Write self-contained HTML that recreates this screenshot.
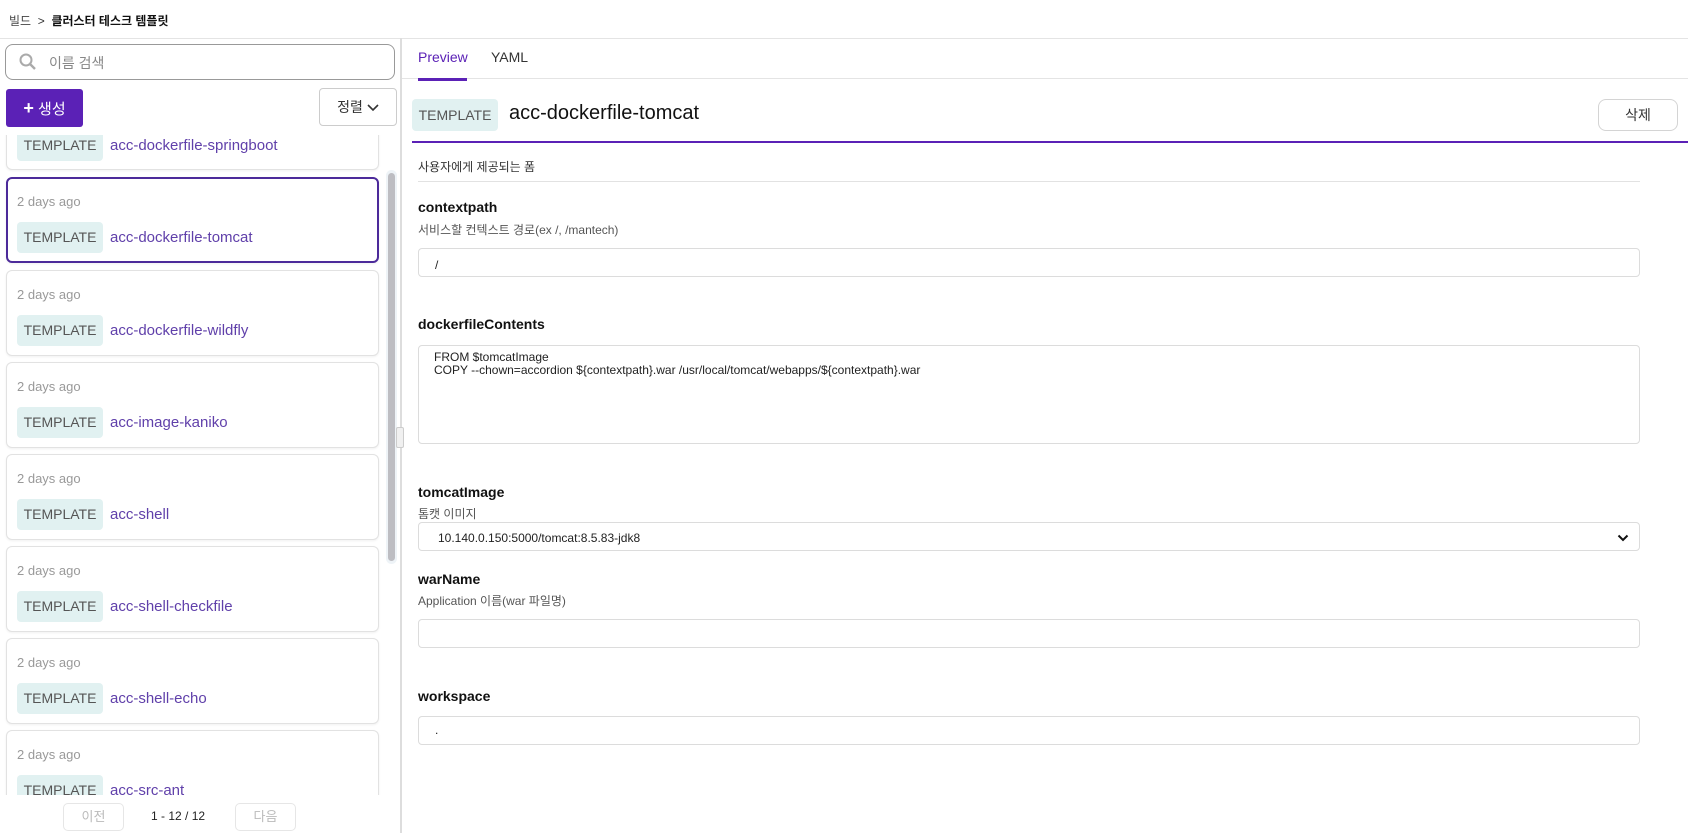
<!DOCTYPE html>
<html><head><meta charset="utf-8"><style>
*{box-sizing:border-box;margin:0;padding:0}
body{width:1688px;height:833px;overflow:hidden;background:#fff;font-family:"Liberation Sans","Noto Sans CJK KR",sans-serif;color:#222;position:relative}
.a{position:absolute}
.card{position:absolute;left:6px;width:373px;height:86px;border:1px solid #e2e2e2;border-radius:6px;background:#fff;box-shadow:0 1px 2px rgba(0,0,0,.06)}
.card.sel{border:2px solid #4c2a9a}
.card .d{position:absolute;left:10px;top:16px;font-size:13px;color:#999}
.badge{position:absolute;background:#e1f1f1;color:#555;border-radius:4px;font-size:14px;text-align:center;line-height:31px}
.card .badge{left:10px;top:44px;width:86px;height:31px}
.card .n{position:absolute;left:103px;top:51px;font-size:15px;color:#6040aa}
.lbl{position:absolute;left:418px;font-size:14px;font-weight:bold;color:#111}
.desc{position:absolute;left:418px;font-size:12px;color:#555}
.inp{position:absolute;left:418px;width:1222px;border:1px solid #dcdcdc;border-radius:4px;background:#fff;font-size:12px;color:#222}
</style></head><body>
<div class="a" style="left:9px;top:12px;font-size:12px;color:#444">빌드 &nbsp;<span style="color:#333">&gt;</span>&nbsp; <b style="color:#111">클러스터 테스크 템플릿</b></div>
<div class="a" style="left:0;top:38px;width:1688px;height:1px;background:#e4e4e4"></div>
<div class="a" style="left:5px;top:44px;width:390px;height:36px;border:1px solid #999;border-radius:8px"></div>
<svg class="a" style="left:18px;top:52px" width="20" height="20" viewBox="0 0 20 20"><circle cx="8" cy="8" r="5.5" fill="none" stroke="#aaa" stroke-width="2"/><path d="M12 12l5 5" stroke="#aaa" stroke-width="2.4"/></svg>
<div class="a" style="left:49px;top:53px;font-size:14px;color:#888">이름 검색</div>
<div class="a" style="left:6px;top:89px;width:77px;height:38px;background:#5b21b6;border-radius:3px;color:#fff;font-size:15px;line-height:38px;text-align:center"><b style="font-size:18px">+</b> 생성</div>
<div class="a" style="left:319px;top:88px;width:78px;height:38px;border:1px solid #ccc;border-radius:4px;font-size:14px;line-height:36px;text-align:center;color:#333">정렬 <svg width="12" height="8" viewBox="0 0 12 8"><path d="M1 1l5 5 5-5" fill="none" stroke="#333" stroke-width="1.6"/></svg></div>
<div class="a" style="left:0;top:135px;width:400px;height:660px;overflow:hidden">
<div class="card" style="top:-50px;height:85px"><div class="badge" style="left:10px;top:44px;width:86px;height:31px">TEMPLATE</div><div class="n">acc-dockerfile-springboot</div></div>
<div class="card sel" style="top:42px"><div class="d" style="left:9px;top:15px">2 days ago</div><div class="badge" style="left:9px;top:43px;width:86px;height:31px">TEMPLATE</div><div class="n" style="left:102px;top:50px">acc-dockerfile-tomcat</div></div>
<div class="card" style="top:135px"><div class="d">2 days ago</div><div class="badge">TEMPLATE</div><div class="n">acc-dockerfile-wildfly</div></div>
<div class="card" style="top:227px"><div class="d">2 days ago</div><div class="badge">TEMPLATE</div><div class="n">acc-image-kaniko</div></div>
<div class="card" style="top:319px"><div class="d">2 days ago</div><div class="badge">TEMPLATE</div><div class="n">acc-shell</div></div>
<div class="card" style="top:411px"><div class="d">2 days ago</div><div class="badge">TEMPLATE</div><div class="n">acc-shell-checkfile</div></div>
<div class="card" style="top:503px"><div class="d">2 days ago</div><div class="badge">TEMPLATE</div><div class="n">acc-shell-echo</div></div>
<div class="card" style="top:595px"><div class="d">2 days ago</div><div class="badge">TEMPLATE</div><div class="n">acc-src-ant</div></div>
<div class="a" style="left:386px;top:35px;width:11px;height:394px;background:#eef3f7;border-radius:6px"></div>
<div class="a" style="left:388px;top:38px;width:7px;height:388px;background:#bdbdc2;border-radius:4px"></div>
</div>
<div class="a" style="left:63px;top:803px;width:61px;height:28px;border:1px solid #e6e6e6;border-radius:5px;font-size:13px;color:#bbb;text-align:center;line-height:26px">이전</div>
<div class="a" style="left:151px;top:809px;font-size:12px;color:#222">1 - 12 / 12</div>
<div class="a" style="left:235px;top:803px;width:61px;height:28px;border:1px solid #e6e6e6;border-radius:5px;font-size:13px;color:#bbb;text-align:center;line-height:26px">다음</div>
<div class="a" style="left:400px;top:38px;width:2px;height:795px;background:#ddd"></div>
<div class="a" style="left:396px;top:427px;width:8px;height:21px;background:#f0f0f0;border:1px solid #ccc;border-radius:2px"></div>
<div class="a" style="left:418px;top:49px;font-size:14px;color:#5b21b6">Preview</div>
<div class="a" style="left:491px;top:49px;font-size:14px;color:#333">YAML</div>
<div class="a" style="left:402px;top:78px;width:1286px;height:1px;background:#e4e4e4"></div>
<div class="a" style="left:418px;top:78px;width:49px;height:3px;background:#5b21b6"></div>
<div class="badge" style="left:412px;top:99px;width:86px;height:32px;line-height:32px">TEMPLATE</div>
<div class="a" style="left:509px;top:102px;font-size:20px;color:#111">acc-dockerfile-tomcat</div>
<div class="a" style="left:1598px;top:99px;width:80px;height:32px;border:1px solid #d4d4d4;border-radius:8px;font-size:14px;text-align:center;line-height:30px;color:#333">삭제</div>
<div class="a" style="left:412px;top:141px;width:1276px;height:2px;background:#5b21b6"></div>
<div class="a" style="left:418px;top:158px;font-size:12px;color:#333">사용자에게 제공되는 폼</div>
<div class="a" style="left:418px;top:181px;width:1222px;height:1px;background:#e2e2e2"></div>
<div class="lbl" style="top:199px">contextpath</div>
<div class="desc" style="top:221px">서비스할 컨텍스트 경로(ex /, /mantech)</div>
<div class="inp" style="top:248px;height:29px;padding:9px 0 0 16px">/</div>
<div class="lbl" style="top:316px">dockerfileContents</div>
<div class="inp" style="top:345px;height:99px;padding:5px 0 0 15px;line-height:13px">FROM $tomcatImage<br>COPY --chown=accordion ${contextpath}.war /usr/local/tomcat/webapps/${contextpath}.war</div>
<div class="lbl" style="top:484px">tomcatImage</div>
<div class="desc" style="top:505px">톰캣 이미지</div>
<div class="inp" style="top:522px;height:29px;padding:8px 0 0 19px">10.140.0.150:5000/tomcat:8.5.83-jdk8<svg class="a" style="right:10px;top:11px" width="12" height="8" viewBox="0 0 12 8"><path d="M1.5 1.5l4.5 4.5 4.5-4.5" fill="none" stroke="#111" stroke-width="2"/></svg></div>
<div class="lbl" style="top:571px">warName</div>
<div class="desc" style="top:592px">Application 이름(war 파일명)</div>
<div class="inp" style="top:619px;height:29px"></div>
<div class="lbl" style="top:688px">workspace</div>
<div class="inp" style="top:716px;height:29px;padding:6px 0 0 16px">.</div>
</body></html>
